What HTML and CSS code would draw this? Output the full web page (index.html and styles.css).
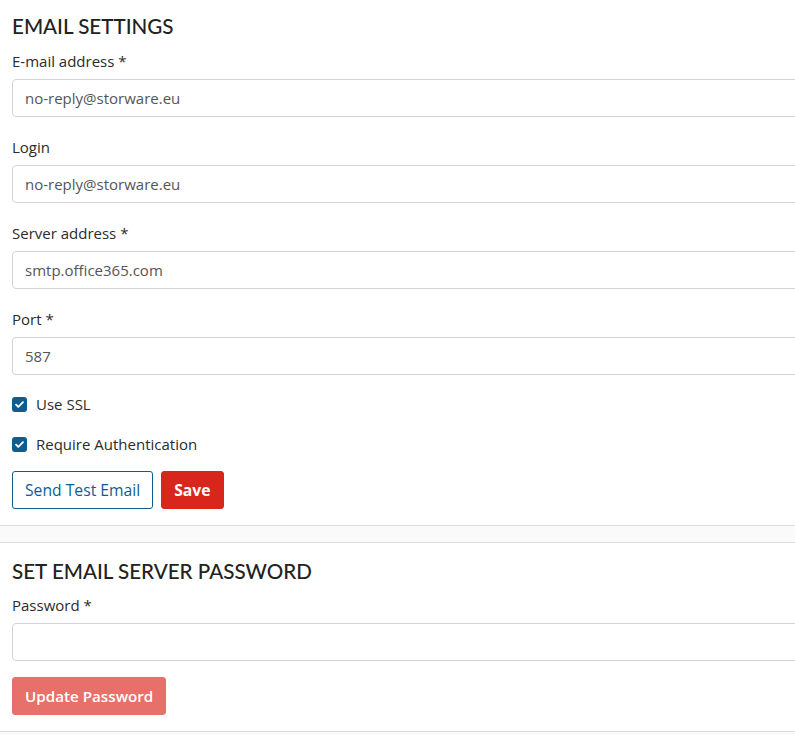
FILE: index.html
```html
<!DOCTYPE html>
<html>
<head>
<meta charset="utf-8">
<link rel="stylesheet" href="styles.css">
</head>
<body>
<section class="card first">
  <h2 class="title">EMAIL SETTINGS</h2>
  <div class="field">
    <label class="label">E-mail address *</label>
    <div class="input">no-reply@storware.eu</div>
  </div>
  <div class="field">
    <label class="label">Login</label>
    <div class="input">no-reply@storware.eu</div>
  </div>
  <div class="field">
    <label class="label">Server address *</label>
    <div class="input">smtp.office365.com</div>
  </div>
  <div class="field">
    <label class="label">Port *</label>
    <div class="input">587</div>
  </div>
  <div class="check">
    <span class="box"><svg viewBox="0 0 16 16" width="15" height="15"><path d="M4.3 8.2l2.4 2.3 5-5" fill="none" stroke="#fff" stroke-width="2" stroke-linecap="round" stroke-linejoin="round"/></svg></span>
    <span class="check-text">Use SSL</span>
  </div>
  <div class="check">
    <span class="box"><svg viewBox="0 0 16 16" width="15" height="15"><path d="M4.3 8.2l2.4 2.3 5-5" fill="none" stroke="#fff" stroke-width="2" stroke-linecap="round" stroke-linejoin="round"/></svg></span>
    <span class="check-text">Require Authentication</span>
  </div>
  <div class="actions">
    <button class="btn btn-outline">Send Test Email</button>
    <button class="btn btn-red">Save</button>
  </div>
</section>
<div class="band"></div>
<section class="card second">
  <h2 class="title">SET EMAIL SERVER PASSWORD</h2>
  <div class="field">
    <label class="label">Password *</label>
    <div class="input"></div>
  </div>
  <div class="actions">
    <button class="btn btn-red disabled">Update Password</button>
  </div>
</section>
<div class="band bottom"></div>
</body>
</html>
```
FILE: styles.css
```css
html, body {
  margin: 0;
  padding: 0;
  background: #fff;
  overflow: hidden;
}
body {
  font-family: "Open Sans", "Noto Sans", sans-serif;
  color: #333;
  width: 795px;
}
.card {
  padding: 14px 0 16px 12px;
  background: #fff;
  border-bottom: 1px solid #dcdcdc;
}
.card.second {
  border-top: 1px solid #dcdcdc;
  padding-top: 16px;
}
.band {
  height: 16px;
  background: #fafafa;
}
.band.bottom {
  height: 10px;
}
.title {
  margin: 0;
  font-family: Lato, "Noto Sans", sans-serif;
  font-weight: 500;
  font-size: 20.6px;
  line-height: 24px;
  color: #222;
}
.field {
  margin-top: 12px;
}
.field + .field {
  margin-top: 19px;
}
.second .field {
  margin-top: 11px;
}
.label {
  display: block;
  font-size: 15px;
  line-height: 22px;
  color: #2b2b2b;
}
.input {
  margin-top: 7px;
  box-sizing: border-box;
  height: 38px;
  width: 800px;
  border: 1px solid #d0d4d9;
  border-radius: 4px;
  padding: 0 12px;
  font-size: 15px;
  line-height: 36px;
  color: #555;
}
.check {
  display: flex;
  align-items: center;
  height: 22px;
  margin-top: 18px;
  gap: 9px;
}
.box {
  width: 15px;
  height: 15px;
  border-radius: 3px;
  background: #0f5c8f;
  display: flex;
}
.check-text {
  font-size: 15px;
  color: #2b2b2b;
}
.actions {
  display: flex;
  gap: 8px;
  margin-top: 16px;
}
.btn {
  box-sizing: border-box;
  height: 38px;
  border-radius: 3px;
  padding: 0 12px;
  font-family: "Open Sans", "Noto Sans", sans-serif;
  font-size: 15.7px;
  cursor: pointer;
}
.btn-outline {
  background: #fff;
  border: 1px solid #0f5c8f;
  color: #0f5c8f;
}
.btn-red {
  background: #d9261c;
  border: 1px solid #d9261c;
  color: #fff;
  font-weight: 700;
}
.btn-red.disabled {
  background: #e8706a;
  border-color: #e8706a;
  font-weight: 600;
  font-size: 15.2px;
}
```
